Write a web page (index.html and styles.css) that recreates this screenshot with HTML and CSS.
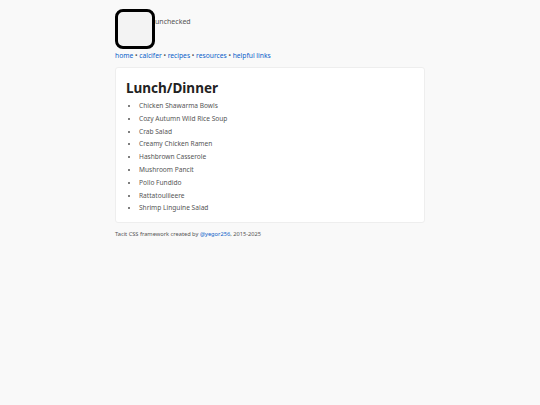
FILE: index.html
```html
<!DOCTYPE html>
<html>
<head>
<meta charset="utf-8">
<link rel="stylesheet" href="styles.css">
</head>
<body>
<div class="page">
  <header class="top">
    <label class="check">
      <span class="box"></span>
      <span class="check-label">unchecked</span>
    </label>
    <nav class="nav">
      <a href="#">home</a> • <a href="#">calcifer</a> • <a href="#">recipes</a> • <a href="#">resources</a> • <a href="#">helpful links</a>
    </nav>
  </header>
  <main class="card">
    <h1 class="title">Lunch/Dinner</h1>
    <ul class="list">
      <li>Chicken Shawarma Bowls</li>
      <li>Cozy Autumn Wild Rice Soup</li>
      <li>Crab Salad</li>
      <li>Creamy Chicken Ramen</li>
      <li>Hashbrown Casserole</li>
      <li>Mushroom Pancit</li>
      <li>Pollo Fundido</li>
      <li>Rattatoulileere</li>
      <li>Shrimp Linguine Salad</li>
    </ul>
  </main>
  <footer class="foot">Tacit CSS framework created by <a href="#">@yegor256</a>, 2015-2025</footer>
</div>
</body>
</html>
```

FILE: styles.css
```css
html, body {
  margin: 0;
  padding: 0;
  background: #f9f9f9;
}
body {
  font-family: "Noto Sans", "Open Sans", sans-serif;
  color: #444;
}
.page {
  width: 310px;
  margin: 0 auto;
  padding-top: 9px;
}
.check {
  display: flex;
  align-items: flex-start;
}
.box {
  width: 34px;
  height: 34px;
  border: 3px solid #000;
  border-radius: 8px;
  background: #f3f3f3;
}
.check-label {
  font-size: 7px;
  color: #555;
  margin-top: 8px;
}
.nav {
  margin-top: 1px;
  font-size: 6.7px;
  color: #555;
  line-height: 12px;
}
.nav a, .foot a {
  color: #0a5fc9;
  text-decoration: none;
}
.card {
  margin-top: 5px;
  background: #fff;
  border: 1px solid #eee;
  border-radius: 3px;
  padding: 9px 11px 7px 10px;
}
.title {
  margin: 0;
  font-size: 13.5px;
  font-weight: 700;
  color: #222;
  line-height: 22px;
}
.list {
  margin: 1px 0 0;
  padding-left: 13px;
  font-size: 6.6px;
  line-height: 12.8px;
  color: #555;
}
.foot {
  margin-top: 7px;
  font-size: 5.7px;
  color: #555;
}
```
